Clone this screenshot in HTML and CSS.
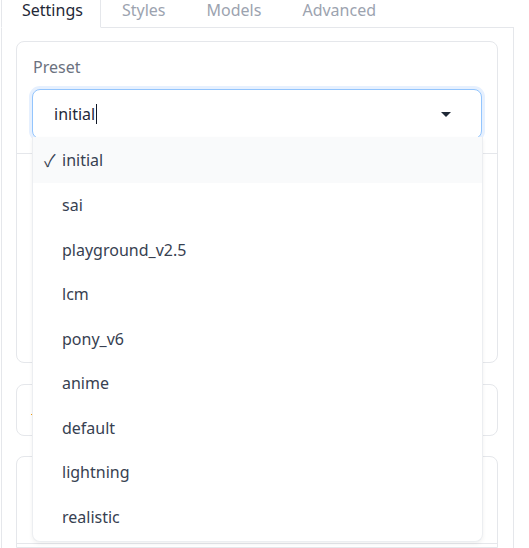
FILE: index.html
```html
<!DOCTYPE html>
<html>
<head>
<meta charset="utf-8">
<link rel="stylesheet" href="styles.css">
</head>
<body>
<div class="wrap">
  <nav class="tabs">
    <div class="tab active">Settings</div>
    <div class="tab">Styles</div>
    <div class="tab">Models</div>
    <div class="tab">Advanced</div>
    <div class="tab-fill"></div>
  </nav>
  <div class="panel">
    <div class="card card-one">
      <div class="preset">
        <div class="label">Preset</div>
        <div class="input-wrap">
          <div class="input">
            <span class="value">initial<span class="caret"></span></span>
            <svg class="arrow" width="10" height="5" viewBox="0 0 10 5"><path d="M0 0H10L5 5Z" fill="#1f2937"/></svg>
          </div>
          <ul class="options">
            <li class="option selected"><span class="check">✓</span>initial</li>
            <li class="option"><span class="check"></span>sai</li>
            <li class="option"><span class="check"></span>playground_v2.5</li>
            <li class="option"><span class="check"></span>lcm</li>
            <li class="option"><span class="check"></span>pony_v6</li>
            <li class="option"><span class="check"></span>anime</li>
            <li class="option"><span class="check"></span>default</li>
            <li class="option"><span class="check"></span>lightning</li>
            <li class="option"><span class="check"></span>realistic</li>
          </ul>
        </div>
      </div>
      <div class="card-body"></div>
    </div>
    <div class="card card-two"><span class="accent"></span></div>
    <div class="card card-three">
      <div class="card-three-top"></div>
      <div class="card-three-rest"></div>
    </div>
  </div>
</div>
</body>
</html>
```

FILE: styles.css
```css
html, body {
  margin: 0;
  padding: 0;
  background: #ffffff;
  overflow: hidden;
  height: 548px;
}
body {
  font-family: "Noto Sans", "DejaVu Sans", sans-serif;
  font-size: 16px;
  color: #1f2937;
}
.wrap {
  margin-left: 1px;
  width: 513px;
}
.tabs {
  display: flex;
  height: 28px;
}
.tab {
  box-sizing: border-box;
  height: 28px;
  padding: 0 20px 0 21px;
  line-height: 20px;
  color: #9ca3af;
  border-bottom: 1px solid #e5e7eb;
  white-space: nowrap;
}
.tab.active {
  color: #1f2937;
  width: 100px;
  border-left: 1px solid #e5e7eb;
  border-right: 1px solid #e5e7eb;
  border-bottom: 1px solid #ffffff;
  padding-left: 20px;
}
.tab-fill {
  flex: 1;
  border-bottom: 1px solid #e5e7eb;
}
.panel {
  border-left: 1px solid #e5e7eb;
  border-right: 1px solid #e5e7eb;
  padding: 13px 15px 0 14px;
}
.card {
  border: 1px solid #e5e7eb;
  border-radius: 8px;
}
.preset {
  padding: 15px 15px 14px 15px;
  border-bottom: 1px solid #e5e7eb;
}
.label {
  line-height: 20px;
  color: #6b7280;
  padding-left: 1px;
  margin-bottom: 12px;
}
.input-wrap {
  position: relative;
}
.input {
  box-sizing: border-box;
  height: 50px;
  display: flex;
  align-items: center;
  border: 1px solid #93c5fd;
  border-radius: 8px;
  box-shadow: 0 0 0 3px #e6f0fe;
  padding: 0 30px 0 21px;
  background: #ffffff;
}
.value {
  flex: 1;
  color: #1f2937;
  line-height: 20px;
  display: flex;
  align-items: center;
}
.caret {
  display: inline-block;
  width: 1px;
  height: 20px;
  background: #111827;
  margin-left: 1px;
}
.arrow {
  display: block;
  margin-top: 1px;
}
.options {
  position: absolute;
  top: 48px;
  left: 0;
  right: -1px;
  margin: 0;
  padding: 0 0 2px 0;
  list-style: none;
  background: #ffffff;
  border: 1px solid #eceef1;
  border-top: none;
  border-radius: 0 0 8px 8px;
  box-shadow: 0 2px 4px rgba(0, 0, 0, 0.06);
  z-index: 10;
}
.option {
  height: 44.5px;
  display: flex;
  align-items: center;
  padding-left: 11px;
  color: #374151;
  line-height: 20px;
}
.option.selected {
  background: #f9fafb;
  height: 46px;
}
.check {
  display: inline-block;
  width: 18px;
  font-family: "Noto Sans CJK SC", "DejaVu Sans", sans-serif;
  font-size: 17px;
  line-height: 20px;
  color: #374151;
}
.card-body {
  height: 208px;
}
.card-two {
  margin-top: 21px;
  height: 50px;
  position: relative;
}
.accent {
  position: absolute;
  left: 14px;
  top: 29px;
  width: 2px;
  height: 1px;
  background: #f59e0b;
}
.card-three {
  margin-top: 20px;
  border-bottom-left-radius: 0;
  border-bottom-right-radius: 0;
}
.card-three-top {
  height: 86px;
  border-bottom: 1px solid #e5e7eb;
}
.card-three-rest {
  height: 3px;
}
```
